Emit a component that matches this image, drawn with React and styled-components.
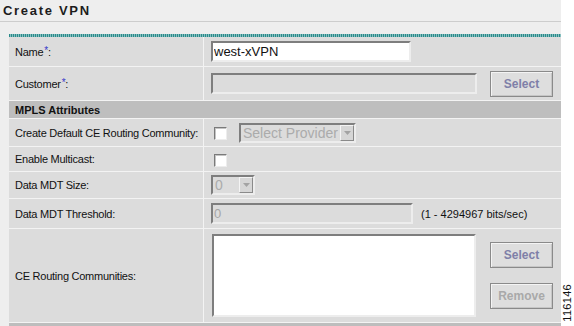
import React from "react";
import styled, { createGlobalStyle } from "styled-components";

const GlobalStyle = createGlobalStyle`
  html, body { margin: 0; padding: 0; background: #ffffff; }
  body { font-family: "Liberation Sans", Arial, sans-serif; }
`;

const Root = styled.div`
  position: relative;
  width: 574px;
  height: 326px;
  overflow: hidden;
  background: #ffffff;
`;

const Panel = styled.div`
  width: 561px;
  height: 326px;
  background: #eeeeee;
  display: flex;
  flex-direction: column;
`;

const Title = styled.h1`
  margin: 0;
  height: 21px;
  padding-left: 3px;
  font: bold 13px "Liberation Sans", Arial, sans-serif;
  letter-spacing: 1.7px;
  line-height: 21px;
  color: #1c1c1c;
  border-bottom: 1px solid #cdcdcd;
`;

const Form = styled.div`
  margin: 12px 0 0 9px;
  display: flex;
  flex-direction: column;
`;

const TealRule = styled.div`
  height: 3px;
  background: repeating-linear-gradient(90deg, #2b8a8a 0 1px, #86c0c0 1px 2px);
`;

const Grid = styled.div`
  display: grid;
  grid-template-columns: 194px 1fr;
  grid-template-rows: 29px 33px 17px 27px 24px 26px 29px 93px 10px;
  gap: 1px;
  background: #f3f3f3;
`;

const Label = styled.div`
  background: #dcdcdc;
  display: flex;
  align-items: center;
  padding-left: 6px;
  font-size: 11px;
  letter-spacing: -0.25px;
  color: #111111;
`;

const Required = styled.sup`
  color: #3838c8;
  font-size: 10px;
  line-height: 0;
  margin: 0 0 0 1px;
  position: relative;
  top: -1px;
`;

const Value = styled.div`
  background: #dcdcdc;
  display: flex;
  align-items: ${(p) => (p.$top ? "flex-start" : "center")};
  padding: ${(p) => (p.$top ? "5px 0 0 8px" : "0 0 0 7px")};
  font-size: 11px;
  color: #111111;
`;

const SectionHeader = styled.div`
  grid-column: 1 / -1;
  background: #bebebe;
  display: flex;
  align-items: center;
  padding-left: 6px;
  font-size: 11px;
  font-weight: bold;
  color: #111111;
`;

const BottomBar = styled.div`
  grid-column: 1 / -1;
  background: #bdbdbd;
`;

const TextInput = styled.input`
  box-sizing: border-box;
  width: ${(p) => p.$w}px;
  height: ${(p) => p.$h || 21}px;
  margin: 0;
  padding: 0 1px;
  border-style: solid;
  border-width: 2px;
  border-color: #7e7e7e #ededed #ededed #7e7e7e;
  background: ${(p) => (p.disabled ? "#dcdcdc" : "#ffffff")};
  font: 13px "Liberation Sans", Arial, sans-serif;
  color: ${(p) => (p.disabled ? "#a6a6a6" : "#111111")};
  outline: none;
`;

const TextArea = styled.div`
  box-sizing: border-box;
  width: 264px;
  height: 83px;
  border-style: solid;
  border-width: 2px;
  border-color: #7e7e7e #ededed #ededed #7e7e7e;
  background: #ffffff;
`;

const Checkbox = styled.input.attrs({ type: "checkbox" })`
  appearance: none;
  box-sizing: border-box;
  width: 13px;
  height: 13px;
  margin: 2px 0 0 3px;
  background: #ffffff;
  border-style: solid;
  border-width: 1px;
  border-color: #7a7a7a #ededed #ededed #7a7a7a;
  box-shadow: inset 1px 1px 0 #c4c4c4;
`;

const SelectBox = styled.div`
  box-sizing: border-box;
  width: ${(p) => p.$w}px;
  height: 20px;
  margin-left: ${(p) => p.$ml || 0}px;
  display: flex;
  align-items: stretch;
  border-style: solid;
  border-width: 2px;
  border-color: #7e7e7e #ededed #ededed #7e7e7e;
  background: #dcdcdc;
`;

const SelectText = styled.span`
  flex: 1;
  padding-left: 2px;
  font: 14px/16px "Liberation Sans", Arial, sans-serif;
  color: #ababab;
  white-space: nowrap;
  overflow: hidden;
`;

const ArrowBtn = styled.span`
  box-sizing: border-box;
  width: 14px;
  display: flex;
  align-items: center;
  justify-content: center;
  background: #d6d6d6;
  border-style: solid;
  border-width: 1px;
  border-color: #f4f4f4 #8a8a8a #8a8a8a #f4f4f4;
`;

const Button = styled.button`
  box-sizing: border-box;
  width: 63px;
  height: 26px;
  margin: 0;
  padding: 0;
  background: #dedede;
  border: 1px solid #8a8a8a;
  box-shadow: inset 1px 1px 0 #f4f4f4, inset -1px -1px 0 #c6c6c6;
  font: bold 12px "Liberation Sans", Arial, sans-serif;
  color: ${(p) => (p.$muted ? "#a9a9a9" : "#7f80a8")};
`;

const Hint = styled.span`
  margin-left: 8px;
  font-size: 11px;
  color: #111111;
`;

const Row = styled.div`
  display: flex;
  align-items: center;
  gap: ${(p) => p.$gap || 0}px;
`;

const ButtonColumn = styled.div`
  display: flex;
  flex-direction: column;
  gap: 15px;
  margin: 8px 0 0 14px;
`;

const FigureNumber = styled.div`
  position: absolute;
  right: 1px;
  bottom: 4px;
  writing-mode: vertical-rl;
  transform: rotate(180deg);
  font: 11px "Liberation Sans", Arial, sans-serif;
  letter-spacing: 0.3px;
  color: #111111;
`;

const Arrow = () => (
  <svg width="7" height="4" viewBox="0 0 7 4">
    <path d="M0 0 H7 L3.5 4 Z" fill="#a3a3a3" />
  </svg>
);

export default function App() {
  return (
    <Root>
      <GlobalStyle />
      <Panel>
        <Title>Create VPN</Title>
        <Form>
          <TealRule />
          <Grid>
            <Label>
              Name<Required>*</Required>:
            </Label>
            <Value>
              <TextInput $w={200} $h={21} defaultValue="west-xVPN" readOnly />
            </Value>

            <Label>
              Customer<Required>*</Required>:
            </Label>
            <Value>
              <Row $gap={13}>
                <TextInput $w={266} disabled />
                <Button>Select</Button>
              </Row>
            </Value>

            <SectionHeader>MPLS Attributes</SectionHeader>

            <Label>Create Default CE Routing Community:</Label>
            <Value>
              <Checkbox />
              <SelectBox $w={117} $ml={12}>
                <SelectText>Select Provider</SelectText>
                <ArrowBtn>
                  <Arrow />
                </ArrowBtn>
              </SelectBox>
            </Value>

            <Label>Enable Multicast:</Label>
            <Value>
              <Checkbox />
            </Value>

            <Label>Data MDT Size:</Label>
            <Value>
              <SelectBox $w={44}>
                <SelectText>0</SelectText>
                <ArrowBtn>
                  <Arrow />
                </ArrowBtn>
              </SelectBox>
            </Value>

            <Label>Data MDT Threshold:</Label>
            <Value>
              <TextInput $w={202} defaultValue="0" disabled />
              <Hint>(1 - 4294967 bits/sec)</Hint>
            </Value>

            <Label>CE Routing Communities:</Label>
            <Value $top>
              <TextArea />
              <ButtonColumn>
                <Button>Select</Button>
                <Button $muted>Remove</Button>
              </ButtonColumn>
            </Value>

            <BottomBar />
          </Grid>
        </Form>
      </Panel>
      <FigureNumber>116146</FigureNumber>
    </Root>
  );
}
